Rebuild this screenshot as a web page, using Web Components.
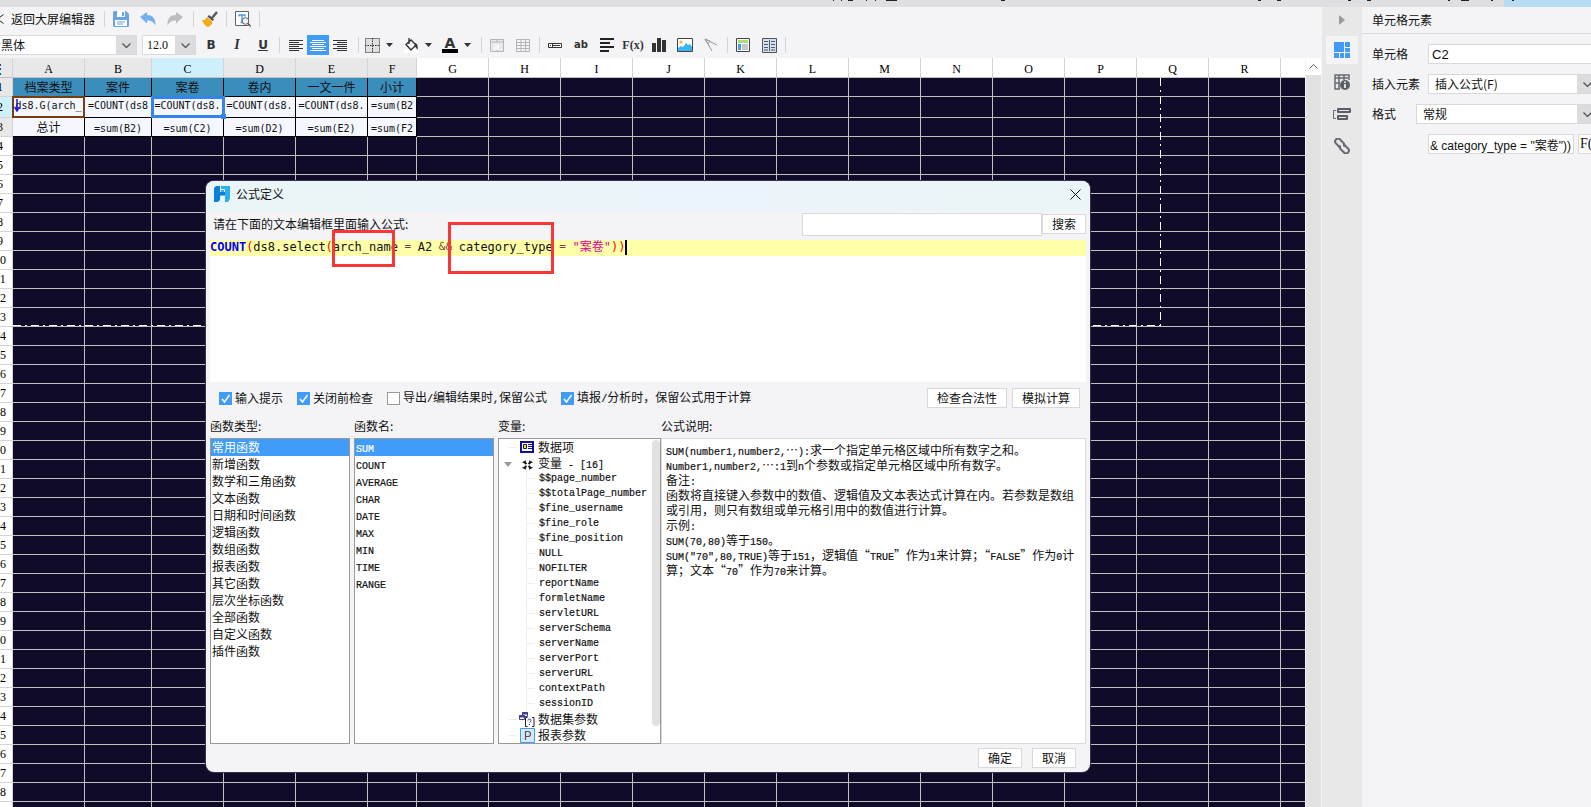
<!DOCTYPE html>
<html lang="zh-CN">
<head>
<meta charset="utf-8">
<title>公式定义</title>
<style>
  html, body { margin: 0; height: 100%; }
  body { font: 12px/16px "Noto Sans CJK SC", "Liberation Sans", sans-serif; color: #111; overflow: hidden; }
</style>
</head>
<body>
<report-app></report-app>
<script>
const define = (name, css, html, ready) => {
  const template = document.createElement('template');
  template.innerHTML = `<style>*{box-sizing:border-box}${css}</style>${html}`;
  customElements.define(name, class extends HTMLElement {
    constructor() {
      super();
      this.attachShadow({ mode: 'open' }).append(template.content.cloneNode(true));
    }
    connectedCallback() { if (ready) ready.call(this, this.shadowRoot); }
  });
};
const esc = s => s.replace(/&/g, '&amp;').replace(/</g, '&lt;');
// Half-width runs get the narrow monospace face, full-width text keeps the CJK face.
const mixed = s => s.split(/([\x20-\x7e]+)/).map((p, i) => i % 2 ? `<span class="half">${esc(p)}</span>` : p).join('');
const HALF = '.half{font-family:"Liberation Mono",monospace;font-size:10px;-webkit-text-stroke:.2px;white-space:pre}';

/* ---------- icons ---------- */
const lines = (c, rows) => rows.map(([a, w], i) => `<path d="M${a} ${.5 + i * 2}h${w}" stroke="${c}"/>`).join('');
const ICONS = {
  save: [16, 16, '<path d="M1.500 0h11.500l3 3v11.500a1.500 1.500 0 0 1-1.500 1.500h-13a1.500 1.500 0 0 1-1.500-1.500v-13a1.500 1.500 0 0 1 1.500-1.500z" fill="#6ba4e3"/><path d="M4 0h8v6h-8zM2 9h12v6h-12z" fill="#fff"/><path d="M9 1h2v4h-2z" fill="#6ba4e3"/><path d="M4 11h8M4 13h6" stroke="#6ba4e3"/>'],
  undo: [16, 16, '<path d="M0 6l7-5v3c5 0 9 3 8.500 11c-1.500-4-4-5.500-8.500-5.500v3z" fill="#75afec"/>'],
  redo: [16, 16, '<path d="M16 6l-7-5v3c-5 0-9 3-8.500 11c1.500-4 4-5.500 8.500-5.500v3z" fill="#bcbcbe"/>'],
  broom: [16, 16, '<path d="M15 1l-5 6" stroke="#5b5b5b" stroke-width="2.500"/><path d="M7 4l5 4.500l-1.500 1.500l-5-4.500z" fill="#4a4a4a"/><path d="M5 6l5 4.500c1 2-1 4-4 5.500c-3-1-5-4-6-7c2 .5 4-.5 5-3z" fill="#f2ab17"/>'],
  find: [16, 16, '<path d="M.5.5h13v14h-13z" fill="#fff" stroke="#5b6068"/><path d="M4 4h6M7 4v7.500M4 3.500v2M10 3.500v2M5.500 11.500h3" stroke="#419bf9" stroke-width="1.400" fill="none"/><circle cx="10.500" cy="10" r="3.300" fill="#f4f4f7" stroke="#5b6068"/><path d="M13 12.500l3 3" stroke="#5b6068" stroke-width="1.500"/>'],
  left: [14, 11, lines('#333', [[0, 14], [0, 10], [0, 14], [0, 10], [0, 14], [0, 10]])],
  center: [16, 11, lines('#fff', [[2, 12], [0, 16], [2, 12], [0, 16], [2, 12], [0, 16]])],
  right: [14, 11, lines('#333', [[0, 14], [4, 10], [0, 14], [4, 10], [0, 14], [4, 10]])],
  border: [15, 15, '<path d="M0 0h15v15h-15z" fill="#dfdfdf"/><path d="M.5.5h14v14h-14z" fill="none" stroke="#222" stroke-dasharray="1 1"/><path d="M7.500 0v15M0 7.500h15" stroke="#333" stroke-dasharray="1.500 1"/>'],
  bucket: [15, 15, '<path d="M0 11h15v4h-15z" fill="#fff"/><path d="M5 0v6M2 6.500l5-4.500l5 5l-5 5z" fill="none" stroke="#333" stroke-width="1.400"/><path d="M11 5c3 1 3 4 2.500 7c-1-2-2-3-3-4z" fill="#333"/>'],
  caret: [7, 4, '<path d="M0 0h7l-3.500 4z" fill="#333"/>'],
  merge: [14, 13, '<path d="M.5.500h13v12h-13z" fill="#e9e9ec" stroke="#b5b5b8"/><path d="M0 3h14M7 0v3M7 11v2" stroke="#b5b5b8"/><path d="M5 6h3.500v4h-4v-2h4" fill="none" stroke="#fff"/>'],
  grid: [14, 13, '<path d="M.5.500h13v12h-13z" fill="#f4f4f7" stroke="#b5b5b8"/><path d="M0 3.500h14M0 6.500h14M0 9.500h14M5 0v13M9.500 0v13" stroke="#b5b5b8"/>'],
  field: [14, 5, '<path d="M.5.500h13v4h-13z" fill="#fff" stroke="#333"/><path d="M2 2.500h1M5 2.500h7M4.500 0v5" stroke="#333"/>'],
  para: [14, 14, '<path d="M0 1h14M0 5h10M0 9h14M0 13h9" stroke="#222" stroke-width="2"/>'],
  chart: [14, 14, '<path d="M0 5h4v9h-4zM5 0h4v14h-4zM10 2h4v12h-4z" fill="#333"/>'],
  image: [16, 14, '<path d="M.5.500h15v13h-15z" fill="#fff" stroke="#444"/><circle cx="4" cy="4" r="1.600" fill="#fbb03b"/><path d="M1 13v-3l3-2l2 1l3-4l2 2l2-1l2 3v4z" fill="#3bb4f2"/>'],
  diag: [14, 14, '<path d="M1 1l12 6M1 1l7 12M1 1l5 2l-2 3z" fill="none" stroke="#999"/>'],
  layout: [14, 14, '<path d="M.5.500h13v13h-13z" fill="#fff" stroke="#444"/><path d="M2 2h10v3h-10z" fill="#a9dd77"/><path d="M2 6h3v6h-3z" fill="#419bf9"/><path d="M6 6h6v6h-6z" fill="#c8c8ca"/>'],
  columns: [15, 15, '<path d="M.5.500h14v14h-14z" fill="#cfe2f8" stroke="#555"/><path d="M7.500 2v11M2 3.500h4M2 6.500h4M2 9.500h4M2 12h4M9 3.500h4M9 6.500h4M9 9.500h4M9 12h4" stroke="#555"/>'],
  play: [6, 10, '<path d="M0 0l6 5l-6 5z" fill="#9a9a9c"/>'],
  cells: [16, 16, '<path d="M0 0h10v10h-10zM11 0h5v5h-5zM11 6h5v4h-5zM0 11h5v5h-5zM6 11h4v5h-4zM11 11h5v5h-5z" fill="#419bf9"/>'],
  info: [16, 16, '<path d="M1 4v-3h14v5M1 4h13M1 4v11h5M5 1v14M10 1v5M1 9h5" fill="none" stroke="#666a73" stroke-width="1.500"/><circle cx="11" cy="11" r="5" fill="#5b5f68"/><path d="M11 10v4M11 7.500v1.500" stroke="#fff" stroke-width="1.600"/>'],
  align: [18, 12, '<path d="M3 2.500h-2.500v8h2.500" fill="none" stroke="#666a73"/><path d="M5 1h12v3h-12zM5 8h9v3h-9z" fill="none" stroke="#5b5f68" stroke-width="2" stroke-linejoin="round"/>'],
  link: [16, 16, '<g fill="none" stroke="#666a73" stroke-width="2"><path d="M7 9.500l-1 0l-4-4a2.600 2.600 0 0 1 4-4l3.500 3.500a2.600 2.600 0 0 1 0 3.500"/><path d="M9 6.500l1 0l4 4a2.600 2.600 0 0 1-4 4l-3.500-3.500a2.600 2.600 0 0 1 0-3.500"/></g>'],
  down: [9, 5, '<path d="M.5.500l4 4l4-4" fill="none" stroke="#555" stroke-width="1.300"/>'],
  up: [9, 5, '<path d="M.5 4.500l4-4l4 4" fill="none" stroke="#555"/>'],
  back: [4, 10, '<path d="M3.500.500l-6 4.500l6 4.500" fill="none" stroke="#222"/>'],
  close: [11, 11, '<path d="M.5.500l10 10M10.500.500l-10 10" stroke="#111"/>'],
  logo: [16, 16, '<path d="M0 2l2-2h4v6h5v4h-5v4l-2 2h-4z" fill="#0a7fdb"/><path d="M7 0h9v13l-2 3h-3v-10h-4z" fill="#2db0e8"/><path d="M6.500 0v3.500h4v2.500M11 10h-4.500v3" stroke="#e9f5fa" fill="none"/>'],
  data: [14, 12, '<path d="M1 1h12v10h-12z" fill="#fff" stroke="#10109a" stroke-width="2"/><path d="M3.500 3.500h3v4h-3z" fill="#ffe600" stroke="#10109a"/><path d="M8 3.500h4M8 5.500h4M8 7.500h4" stroke="#10109a"/>'],
  vars: [11, 10, '<path d="M1.500 1.500l3 2.500M9.500 1.500l-3 2.500M1.500 8.500l3-2.500M9.500 8.500l-3-2.500" stroke="#111" stroke-width="2"/><path d="M3.500.500v2h-3M7.500.500v2h3M3.500 9.500v-2h-3M7.500 9.500v-2h3" fill="none" stroke="#222"/>'],
  dataset: [16, 15, '<path d="M3.500.500h5v4h-5zM.5 3.500h5v4h-5z" fill="#fff" stroke="#3d3d9a"/><path d="M3 1.500h6M0 4.500h6" stroke="#3d3d9a" stroke-width="2"/><path d="M8.500 5.500h-2v9h2M13 5.500h2v9h-2" fill="none" stroke="#222"/><path d="M9 8.500q0-1.500 1.500-1.500t1.500 1.500q0 1-1.500 2M10.500 12v1" fill="none" stroke="#3d3d9a"/>'],
  param: [15, 15, '<path d="M.5.500h14v14h-14z" fill="#d5e9fb" stroke="#419bf9"/><path d="M5.500 12v-8.500h2.500a2.300 2.300 0 0 1 0 5h-2.500" fill="none" stroke="#555" stroke-width="1.200"/>'],
  open: [8, 5, '<path d="M0 0h8l-4 5z" fill="#9a9a9a"/>'],
  pointer: [6, 13, '<path d="M3 0v12M.5 8l2.500 4l2.500-4" fill="none" stroke="#1414e6" stroke-width="1.500"/>'],
  // Lower edges of the window tabs that sit above the toolbar.
  tabs: [771, 2, '<path d="M13 .5h1M21 .5h1M28 .5h5M46 .5h1M55 .5h1M66 .5h11M181 .5h4M438 .5h3M457 .5h4M528 .5h3M547 .5h4M628 .5h2M641 .5h8M671 .5h2M692 .5h2" stroke="#222"/>']
};
define('app-icon', ':host{display:inline-flex;flex:none}svg{display:block}', '<svg aria-hidden="true"></svg>', function (root) {
  const [w, h, body] = ICONS[this.getAttribute('name')];
  const svg = root.querySelector('svg');
  svg.setAttribute('width', w); svg.setAttribute('height', h);
  svg.setAttribute('viewBox', `0 0 ${w} ${h}`);
  svg.innerHTML = body;
});

/* ---------- small controls ---------- */
define('tool-button', `
  :host{display:block;flex:none;width:26px;height:20px}
  :host([narrow]){width:22px} :host([on]){background:#419bf9} :host([wide]){width:27px}
  button{all:unset;display:flex;align-items:center;justify-content:center;width:100%;height:100%;font:bold 12px/16px "DejaVu Sans","Liberation Sans",sans-serif;color:#333}
`, '<button type="button"><slot></slot></button>', function (root) {
  if (this.hasAttribute('label')) root.querySelector('button').setAttribute('aria-label', this.getAttribute('label'));
});
define('tool-separator', ':host{flex:none;width:6px;height:16px;background:linear-gradient(#d3d3d6,#d3d3d6) 3px 0/1px 100% no-repeat}', '');
define('drop-down', `
  :host{display:grid;flex:none;height:20px;border:1px solid #d9d9dc;background:#fff}
  select,span{grid-area:1/1;min-width:0;height:18px}
  select{appearance:none;border:0;background:none;margin:0;padding:0 20px 0 var(--inset,6px);font:var(--font,inherit);color:#111;width:100%}
  span{justify-self:end;width:20px;background:#dcdcdf;display:flex;align-items:center;justify-content:center;pointer-events:none}
`, '<select><option></option></select><span><app-icon name="down"></app-icon></span>', function (root) {
  root.querySelector('option').textContent = this.getAttribute('value');
  root.querySelector('select').setAttribute('aria-label', this.getAttribute('label'));
});
define('push-button', `
  :host{display:block;flex:none}
  button{width:100%;height:20px;border:1px solid #d9d9dc;background:#fff;padding:0;font:inherit;line-height:16px;color:#111}
`, '<button type="button"><slot></slot></button>');
define('check-option', `
  :host{display:block;flex:none}
  label{display:flex;align-items:center;gap:3px;white-space:nowrap}
  input{appearance:none;width:13px;height:13px;margin:0;border:1px solid #999;background:#fff}
  input:checked{border-color:#419bf9;background:#419bf9 url('data:image/svg+xml,<svg xmlns="http://www.w3.org/2000/svg" viewBox="0 0 11 11"><path d="M2 6l2.500 3l5-7" fill="none" stroke="white" stroke-width="1.500"/></svg>')}
  ${HALF}
`, '<label><input type="checkbox"><span></span></label>', function (root) {
  root.querySelector('input').checked = this.hasAttribute('checked');
  root.querySelector('span').innerHTML = mixed(this.getAttribute('label'));
});

/* ---------- toolbar ---------- */
define('tool-bar', `
  :host{display:block;flex:none;height:51px;background:#f4f4f7;padding-top:2px}
  div{display:flex;align-items:center;height:20px;white-space:nowrap}
  div+div{margin-top:6px}
  a{display:flex;align-items:center;gap:7px;width:101px;color:#111;text-decoration:none}
  .end{margin-left:2px} .family{width:143px;margin-left:-6px;margin-right:5px} .size{width:54px;margin-right:2px;--font:12px "Liberation Serif",serif;--inset:4px}
  .al{display:flex;padding:0 4px 0 3px}
  .menu{display:flex;align-items:center;width:39px}
  .menu tool-button:last-child{width:12px}
  i{font-family:"Liberation Serif",serif;font-size:14px} u{font-size:12px}
  .fx{font:bold 12px "Liberation Serif",serif} .ab{font-size:10px}
  .color{line-height:12px;border-bottom:4px solid #000;width:16px;text-align:center;font-size:14px}
`, `
<div>
  <a href="#back"><app-icon name="back"></app-icon>返回大屏编辑器</a>
  <tool-separator></tool-separator>
  <tool-button wide label="保存"><app-icon name="save"></app-icon></tool-button>
  <tool-button wide label="撤销"><app-icon name="undo"></app-icon></tool-button>
  <tool-button wide label="重做"><app-icon name="redo"></app-icon></tool-button>
  <tool-separator class="end"></tool-separator>
  <tool-button wide label="格式刷"><app-icon name="broom"></app-icon></tool-button>
  <tool-separator></tool-separator>
  <tool-button wide label="查找"><app-icon name="find"></app-icon></tool-button>
  <tool-separator></tool-separator>
</div>
<div>
  <drop-down class="family" label="字体" value="黑体"></drop-down>
  <drop-down class="size" label="字号" value="12.0"></drop-down>
  <tool-button>B</tool-button><tool-button><i>I</i></tool-button><tool-button><u>U</u></tool-button>
  <tool-separator></tool-separator>
  <span class="al">
    <tool-button narrow label="左对齐"><app-icon name="left"></app-icon></tool-button>
    <tool-button narrow on label="居中"><app-icon name="center"></app-icon></tool-button>
    <tool-button narrow label="右对齐"><app-icon name="right"></app-icon></tool-button>
  </span>
  <tool-separator></tool-separator>
  <span class="menu"><tool-button narrow label="边框"><app-icon name="border"></app-icon></tool-button><tool-button label="更多"><app-icon name="caret"></app-icon></tool-button></span>
  <span class="menu"><tool-button narrow label="填充"><app-icon name="bucket"></app-icon></tool-button><tool-button label="更多"><app-icon name="caret"></app-icon></tool-button></span>
  <span class="menu"><tool-button narrow label="字体颜色"><span class="color">A</span></tool-button><tool-button label="更多"><app-icon name="caret"></app-icon></tool-button></span>
  <tool-separator></tool-separator>
  <tool-button label="合并"><app-icon name="merge"></app-icon></tool-button>
  <tool-button label="拆分"><app-icon name="grid"></app-icon></tool-button>
  <tool-separator></tool-separator>
  <tool-button label="数据列"><app-icon name="field"></app-icon></tool-button>
  <tool-button><span class="ab">ab</span></tool-button>
  <tool-button label="富文本"><app-icon name="para"></app-icon></tool-button>
  <tool-button><span class="fx">F(x)</span></tool-button>
  <tool-button label="图表"><app-icon name="chart"></app-icon></tool-button>
  <tool-button label="图片"><app-icon name="image"></app-icon></tool-button>
  <tool-button label="斜线"><app-icon name="diag"></app-icon></tool-button>
  <tool-separator></tool-separator>
  <tool-button label="布局"><app-icon name="layout"></app-icon></tool-button>
  <tool-button label="分栏"><app-icon name="columns"></app-icon></tool-button>
  <tool-separator></tool-separator>
</div>`);

/* ---------- spreadsheet ---------- */
const WIDTHS = { A: 72, B: 67, C: 72, D: 72, E: 72, F: 49 };
const COLS = [...'ABCDEFGHIJKLMNOPQRS'];
const DATA = {
  1: ['档案类型', '案件', '案卷', '卷内', '一文一件', '小计'],
  2: ['ds8.G(arch_', '=COUNT(ds8', '=COUNT(ds8.', '=COUNT(ds8.', '=COUNT(ds8.', '=sum(B2'],
  3: ['总计', '=sum(B2)', '=sum(C2)', '=sum(D2)', '=sum(E2)', '=sum(F2']
};
const cellText = v => /[a-z]/.test(v) ? `<span class="half">${v}</span>` : v;
define('report-sheet', `
  :host{display:flex;flex:1;min-height:0;background:#f4f4f7}
  .view{position:relative;flex:1;min-width:0;overflow:hidden;background:#100b29}
  table{border-collapse:separate;border-spacing:0;table-layout:fixed;margin-left:-12px;width:1365px}
  th,td{padding:0;border:0 solid #c0c0c0;border-width:0 1px 1px 0;height:19px;white-space:nowrap;text-align:center;font-weight:400}
  th{background:#fff;font:12px/16px "Liberation Serif",serif;color:#000;border-color:#d3d3d8}
  thead th{height:20px;padding-top:2px;border-bottom-color:#c0c0c0}
  th.used{background:#e8e8e8} th.now{background:#cdf0fc}
  td div{height:18px;line-height:18px}
  td.data{background:#f4f7fe;border-color:#000}
  td.head{background:#3b8dbc}
  tr.two td,tr.two th{height:21px} tr.two td div{height:20px;line-height:14px}
  td .half{font-family:"DejaVu Sans Mono",monospace;font-size:10px}
  .print{position:absolute;left:13px;top:20px;width:1148px;height:248px;pointer-events:none;
    background:repeating-linear-gradient(90deg,#fff 0 8px,transparent 8px 12px,#fff 12px 14px,transparent 14px 18px) 0 100%/100% 1px no-repeat,
               repeating-linear-gradient(#fff 0 8px,transparent 8px 12px,#fff 12px 14px,transparent 14px 18px) 100% 0/1px 100% no-repeat}
  .pick{position:absolute;left:151px;top:38px;width:74px;height:22px;border:3px solid #3584ee}
  .pick::after{content:"";position:absolute;right:-4px;bottom:-4px;width:5px;height:5px;background:#3584ee}
  .parent{position:absolute;left:12px;top:38px;width:73px;height:22px;border:2px solid #7a3d10}
  .arrow{position:absolute;left:14px;top:41px}
  aside{flex:none;width:17px;background:#e1e1e1;border-left:1px solid #f4f4f7;border-right:1px solid #f4f4f7}
  aside div{height:17px;background:#fff;display:flex;align-items:center;justify-content:center}
`, `<div class="view"><table></table><div class="print"></div><div class="parent"></div>
<app-icon class="arrow" name="pointer"></app-icon><div class="pick"></div></div>
<aside><div><app-icon name="up"></app-icon></div></aside>`, function (root) {
  let html = `<colgroup><col style="width:25px">${COLS.map(c => `<col style="width:${WIDTHS[c] || 72}px">`).join('')}</colgroup><thead><tr><th class="used">⋮</th>`;
  COLS.forEach(c => { html += `<th class="${c === 'C' ? 'now' : WIDTHS[c] ? 'used' : ''}">${c === 'S' ? '' : c}</th>`; });
  html += '</tr></thead><tbody>';
  for (let r = 1; r < 39; r++) {
    html += `<tr class="${r === 2 ? 'two' : ''}"><th class="${r === 2 ? 'now' : r < 4 ? 'used' : ''}">${r}</th>`;
    COLS.forEach((c, i) => {
      const v = DATA[r] && DATA[r][i];
      html += v ? `<td class="data ${r === 1 ? 'head' : ''}"><div>${cellText(v)}</div></td>` : '<td></td>';
    });
    html += '</tr>';
  }
  html += `<tr><th></th>${'<td></td>'.repeat(COLS.length)}</tr>`;
  root.querySelector('table').innerHTML = html + '</tbody>';
});

/* ---------- side panel ---------- */
define('side-panel', `
  :host{display:flex;flex:none;width:269px;overflow:hidden;background:#f4f4f7}
  nav{flex:none;width:40px;background:#e8e8e8;display:flex;flex-direction:column;align-items:center;gap:4px}
  nav button{all:unset;width:32px;height:28px;display:flex;align-items:center;justify-content:center}
  nav button:first-child{height:25px}
  nav button.on{background:#f4f4f7}
  section{flex:none;width:236px}
  h2{margin:0;font:inherit;height:27px;line-height:25px;padding-left:10px;border-bottom:1px solid #d9d9dc}
  form{padding:10px 0 0 10px;display:flex;flex-direction:column;gap:10px}
  .row{display:flex;align-items:center;height:20px}
  label{flex:none;width:56px} .short{width:44px}
  input{flex:1;min-width:0;height:20px;border:1px solid #d9d9dc;background:#fff;padding:0 3px;font:13px/16px "Liberation Sans","Noto Sans CJK SC",sans-serif;color:#111}
  drop-down{flex:1} .formula{flex:none;width:146px;font-size:12px;line-height:16px;margin:0 4px 0 56px;padding:0 1px}
  .fx{all:unset;flex:none;width:28px;height:18px;line-height:18px;border:1px solid #d9d9dc;background:#fff;font-family:"Liberation Serif",serif;font-size:14px;padding-left:1px}
`, `
<nav>
  <button aria-label="收起"><app-icon name="play"></app-icon></button>
  <button class="on" aria-label="单元格元素"><app-icon name="cells"></app-icon></button>
  <button aria-label="单元格属性"><app-icon name="info"></app-icon></button>
  <button aria-label="悬浮元素"><app-icon name="align"></app-icon></button>
  <button aria-label="超级链接"><app-icon name="link"></app-icon></button>
</nav>
<section>
  <h2>单元格元素</h2>
  <form>
    <div class="row"><label for="cell">单元格</label><input id="cell" value="C2"></div>
    <div class="row"><label>插入元素</label><drop-down label="插入元素" value="插入公式(F)"></drop-down></div>
    <div class="row"><label class="short">格式</label><drop-down label="格式" value="常规"></drop-down></div>
    <div class="row"><input class="formula" aria-label="公式" value='&amp; category_type = "案卷"))'><button type="button" class="fx">F(x)</button></div>
  </form>
</section>`);

/* ---------- formula dialog ---------- */
define('choice-list', `
  :host{display:block}
  ul{list-style:none;margin:0;padding:0;height:100%;border:1px solid #999;background:#fff}
  li{height:17px;line-height:15px;padding-left:1px;white-space:nowrap}
  li[aria-selected=true]{background:#419bf9;color:#fff}
  ${HALF}
`, '<ul role="listbox"></ul>', function (root) {
  root.querySelector('ul').innerHTML = this.getAttribute('items').split(',').map((t, i) => `<li role="option" aria-selected="${!i}">${mixed(t)}</li>`).join('');
});
const VARS = ['$$page_number', '$$totalPage_number', '$fine_username', '$fine_role', '$fine_position', 'NULL', 'NOFILTER', 'reportName', 'formletName', 'servletURL', 'serverSchema', 'serverName', 'serverPort', 'serverURL', 'contextPath', 'sessionID'];
define('variable-tree', `
  :host{display:flex;border:1px solid #999;background:#fff;overflow:hidden}
  ul{list-style:none;margin:0;padding:0;flex:1;min-width:0}
  .top{height:16px;line-height:16px;display:grid;grid-template-columns:17px 22px 1fr;align-items:center;white-space:nowrap}
  .top app-icon{justify-self:center} .twig{display:flex;justify-content:center}
  .twig::before{content:"";width:8px;height:1px;background:#ededed;margin-left:8px}
  .twig.has::before{display:none}
  .kids{margin-left:27px;border-left:1px solid #ededed}
  .kids li{height:15px;line-height:15px;display:flex;align-items:center;gap:4px;white-space:nowrap}
  .kids li::before{content:"";width:8px;height:1px;background:#ededed}
  .bar{flex:none;width:8px;height:286px;margin:1px 0 0;background:#e1e1e1;border-radius:4px}
  ${HALF}
`, `<ul>
  <li class="top"><span class="twig"></span><app-icon name="data"></app-icon><span>数据项</span></li>
  <li><div class="top"><span class="twig has"><app-icon name="open"></app-icon></span><app-icon name="vars"></app-icon><span>${mixed('变量 - [16]')}</span></div>
  <ul class="kids">${VARS.map(v => `<li>${mixed(v)}</li>`).join('')}</ul></li>
  <li class="top"><span class="twig"></span><app-icon name="dataset"></app-icon><span>数据集参数</span></li>
  <li class="top"><span class="twig"></span><app-icon name="param"></app-icon><span>报表参数</span></li>
</ul><div class="bar"></div>`);

const HELP = ['SUM(number1,number2,…):求一个指定单元格区域中所有数字之和。', 'Number1,number2,…:1到n个参数或指定单元格区域中所有数字。', '备注:', '函数将直接键入参数中的数值、逻辑值及文本表达式计算在内。若参数是数组', '或引用，则只有数组或单元格引用中的数值进行计算。', '示例:', 'SUM(70,80)等于150。', 'SUM("70",80,TRUE)等于151，逻辑值“TRUE”作为1来计算；“FALSE”作为0计', '算；文本“70”作为70来计算。'];
define('formula-dialog', `
  :host{display:block;width:884px;height:591px;background:#f4f4f7;border-radius:8px;overflow:hidden;box-shadow:0 0 0 1px #3a3350}
  header{height:30px;display:flex;align-items:center;gap:6px;padding:0 9px 4px 8px;background:linear-gradient(90deg,#e9f5f7,#ebf3fa 60%,#e9f5f6)}
  header h1{flex:1;margin:0;font:inherit}
  header button{all:unset;display:flex}
  .ask{display:flex;align-items:center;height:29px;padding:0 4px 3px 7px}
  .ask label{flex:1} .ask input{width:240px;height:23px;border:1px solid #d9d9dc;background:#fff;padding:0 4px}
  .ask push-button{width:44px}
  .editor{height:142px;margin:0 4px;background:#fff;outline:0}
  .line{display:flex;height:16px;line-height:14px;background:#ffa;font-family:"DejaVu Sans Mono","Noto Sans CJK SC",monospace;font-size:12px;white-space:pre}
  .line b{color:#00f} .line .p{color:#f00} .line .o{color:#804040;font-size:11px} .line .s{color:#dc009c}
  .caret{width:2px;height:15px;background:#000}
  .options{display:flex;align-items:center;height:32px;padding:0 10px 0 13px}
  .options check-option+check-option{margin-left:14px}
  .gap{flex:1} .b5{width:80px;margin-right:5px} .b4{width:68px}
  .panes{display:grid;grid-template:24px 306px/140px 140px 163px 1fr;column-gap:4px;padding:0 4px}
  .panes h3{margin:0;font:inherit;line-height:24px}
  .panes .wide{margin-left:-4px}
  .help{border:1px solid #d9d9dc;background:#fff;padding:3px 4px 0;line-height:15px;white-space:pre;overflow:hidden}
  .help p{margin:0;height:15px}
  footer{display:flex;justify-content:flex-end;gap:10px;padding:4px 14px 0}
  footer push-button{width:44px}
  .mark{position:absolute;border:3px solid #fa3636;pointer-events:none}
  .m1{left:126px;top:49px;width:63px;height:37px} .m2{left:242px;top:41px;width:106px;height:52px}
  ${HALF}
`, `
<header><app-icon name="logo"></app-icon><h1>公式定义</h1><button aria-label="关闭"><app-icon name="close"></app-icon></button></header>
<div class="ask"><label for="search">请在下面的文本编辑框里面输入公式:</label><input id="search"><push-button>搜索</push-button></div>
<div class="editor" role="textbox" aria-multiline="true" contenteditable="true" spellcheck="false"><div class="line"><b>COUNT</b><span class="p">(</span>ds8.select<span class="p">(</span>arch_name<span class="o"> = </span>A2<span class="o"> &amp;&amp; </span>category_type<span class="o"> = </span><span class="s">"案卷"</span><span class="p">))</span><span class="caret"></span></div></div>
<div class="options">
  <check-option checked label="输入提示"></check-option><check-option checked label="关闭前检查"></check-option><check-option label="导出/编辑结果时,保留公式"></check-option><check-option checked label="填报/分析时，保留公式用于计算"></check-option>
  <span class="gap"></span><push-button class="b5">检查合法性</push-button><push-button class="b4">模拟计算</push-button>
</div>
<div class="panes">
  <h3>函数类型:</h3><h3>函数名:</h3><h3>变量:</h3><h3 class="wide">公式说明:</h3>
  <choice-list items="常用函数,新增函数,数学和三角函数,文本函数,日期和时间函数,逻辑函数,数组函数,报表函数,其它函数,层次坐标函数,全部函数,自定义函数,插件函数"></choice-list>
  <choice-list items="SUM,COUNT,AVERAGE,CHAR,DATE,MAX,MIN,TIME,RANGE"></choice-list>
  <variable-tree></variable-tree>
  <div class="help wide">${HELP.map(t => `<p>${mixed(t)}</p>`).join('')}</div>
</div>
<footer><push-button>确定</push-button><push-button>取消</push-button></footer>
<div class="mark m1"></div><div class="mark m2"></div>`);

/* ---------- application shell ---------- */
define('report-app', `
  :host{display:flex;flex-direction:column;height:100vh;position:relative;overflow:hidden}
  .tabs{flex:none;height:7px;display:flex;justify-content:flex-end;align-items:flex-start;background:linear-gradient(#b8dcf2,#b8dcf2) 100% 0/87px 100% no-repeat #dfdfe1}
  .work{flex:1;min-height:0;display:flex}
  main{flex:1;min-width:0;display:flex;flex-direction:column}
  formula-dialog{position:absolute;left:206px;top:181px}
`, `<div class="tabs"><app-icon name="tabs"></app-icon></div><div class="work"><main><tool-bar></tool-bar><report-sheet></report-sheet></main><side-panel></side-panel></div><formula-dialog></formula-dialog>`);
</script>
</body>
</html>
